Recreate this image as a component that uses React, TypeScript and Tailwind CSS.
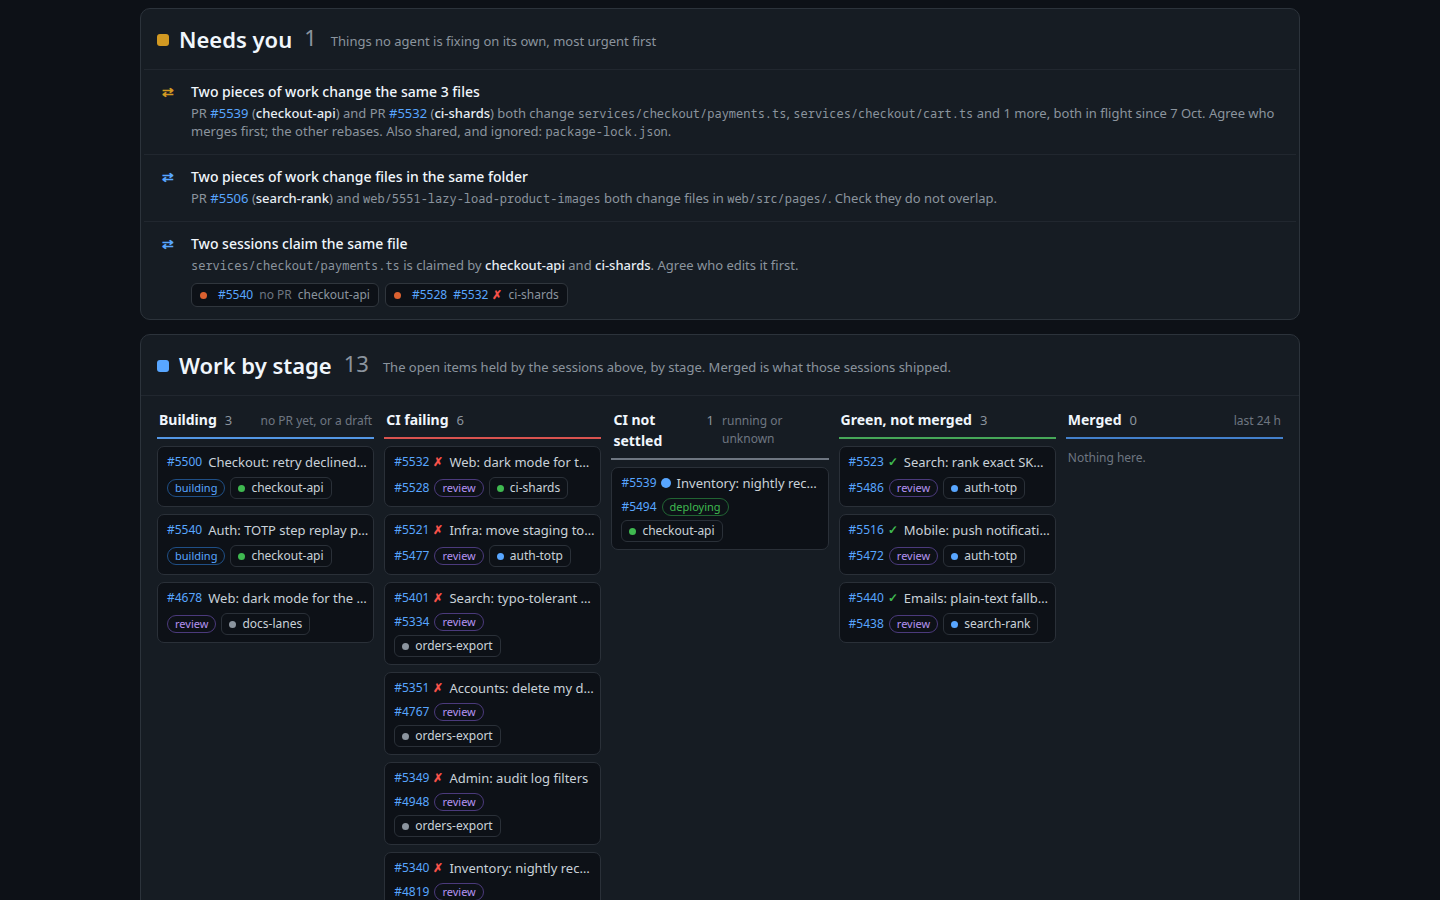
import type { ReactNode } from 'react';

type Tone = 'green' | 'blue' | 'gray';
type Stage = 'building' | 'review' | 'deploying';
type Check = 'fail' | 'pass' | 'running';

type Work = {
  id: string;
  title: string;
  check?: Check;
  issue?: string;
  stage: Stage;
  session: string;
  tone: Tone;
};

type Column = {
  name: string;
  count: number;
  note?: string;
  line: string;
  items: Work[];
};

const dotTone = {
  green: 'bg-[#3fb950]',
  blue: 'bg-[#58a6ff]',
  gray: 'bg-[#8b949e]',
};

const stageTone = {
  building: 'border-[#1f4f86] text-[#58a6ff]',
  review: 'border-[#4b3a7c] text-[#b392f0]',
  deploying: 'border-[#216433] text-[#3fb950]',
};

const columns: Column[] = [
  {
    name: 'Building',
    count: 3,
    note: 'no PR yet, or a draft',
    line: 'border-[#5497e5]',
    items: [
      { id: '#5500', title: 'Checkout: retry declined…', stage: 'building', session: 'checkout-api', tone: 'green' },
      { id: '#5540', title: 'Auth: TOTP step replay p…', stage: 'building', session: 'checkout-api', tone: 'green' },
      { id: '#4678', title: 'Web: dark mode for the …', stage: 'review', session: 'docs-lanes', tone: 'gray' },
    ],
  },
  {
    name: 'CI failing',
    count: 6,
    line: 'border-[#d9534f]',
    items: [
      { id: '#5532', check: 'fail', title: 'Web: dark mode for t…', issue: '#5528', stage: 'review', session: 'ci-shards', tone: 'green' },
      { id: '#5521', check: 'fail', title: 'Infra: move staging to…', issue: '#5477', stage: 'review', session: 'auth-totp', tone: 'blue' },
      { id: '#5401', check: 'fail', title: 'Search: typo-tolerant …', issue: '#5334', stage: 'review', session: 'orders-export', tone: 'gray' },
      { id: '#5351', check: 'fail', title: 'Accounts: delete my d…', issue: '#4767', stage: 'review', session: 'orders-export', tone: 'gray' },
      { id: '#5349', check: 'fail', title: 'Admin: audit log filters', issue: '#4948', stage: 'review', session: 'orders-export', tone: 'gray' },
      { id: '#5340', check: 'fail', title: 'Inventory: nightly rec…', issue: '#4819', stage: 'review', session: 'orders-export', tone: 'gray' },
    ],
  },
  {
    name: 'CI not settled',
    count: 1,
    note: 'running or unknown',
    line: 'border-[#6e7681]',
    items: [
      { id: '#5539', check: 'running', title: 'Inventory: nightly rec…', issue: '#5494', stage: 'deploying', session: 'checkout-api', tone: 'green' },
    ],
  },
  {
    name: 'Green, not merged',
    count: 3,
    line: 'border-[#46a758]',
    items: [
      { id: '#5523', check: 'pass', title: 'Search: rank exact SK…', issue: '#5486', stage: 'review', session: 'auth-totp', tone: 'blue' },
      { id: '#5516', check: 'pass', title: 'Mobile: push notificati…', issue: '#5472', stage: 'review', session: 'auth-totp', tone: 'blue' },
      { id: '#5440', check: 'pass', title: 'Emails: plain-text fallb…', issue: '#5438', stage: 'review', session: 'search-rank', tone: 'blue' },
    ],
  },
  { name: 'Merged', count: 0, note: 'last 24 h', line: 'border-[#4380cb]', items: [] },
];

function Ref({ children }: { children: string }) {
  return <a href={children} className="text-[#58a6ff] hover:underline">{children}</a>;
}

function Code({ children }: { children: string }) {
  return <code className="font-['Noto_Sans_Mono','DejaVu_Sans_Mono',monospace] text-[12px] leading-none">{children}</code>;
}

function Name({ children }: { children: string }) {
  return <b className="font-medium text-[#e6edf3]">{children}</b>;
}

function CheckMark({ check }: { check: Check }) {
  if (check === 'running') return <span className="w-[10px] h-[10px] rounded-full bg-[#58a6ff] shrink-0" />;
  if (check === 'pass') return <span className="font-bold text-[#3fb950]">✓</span>;
  return <span className="font-bold text-[#f85149]">✗</span>;
}

function PanelHead({ title, count, sub, square }: { title: string; count: number; sub: string; square: string }) {
  return (
    <header className="flex items-center h-[61px] border-b border-[#21272f]">
      <span className={`w-3 h-3 rounded-[3px] mt-[2px] mr-[10px] ${square}`} />
      <h2 className="text-[22px] leading-[30px] font-semibold text-[#f0f6fc]">{title}</h2>
      <div className="flex items-baseline gap-[14px] ml-3 pb-1">
        <span className="text-[22px] leading-[30px] text-[#8b949e]">{count}</span>
        <p className="text-[13px] text-[#8b949e]">{sub}</p>
      </div>
    </header>
  );
}

function Notice({ title, icon, children, chips }: { title: string; icon: string; children: ReactNode; chips?: ReactNode }) {
  return (
    <li className="flex pl-[14px] pr-[15px] pt-3 pb-[14px] border-b border-[#21272f] last:border-b-0 last:pb-3">
      <span className={`w-[33px] pl-1 shrink-0 text-[14px] leading-5 font-bold ${icon}`}>⇄</span>
      <div>
        <h3 className="text-[14px] leading-5 font-medium text-[#f0f6fc]">{title}</h3>
        <p className="mt-[2px] text-[13px] leading-[18px] text-[#8b949e]">{children}</p>
        {chips && <div className="flex flex-wrap gap-[6px] mt-[9px]">{chips}</div>}
      </div>
    </li>
  );
}

function SessionChip({ children }: { children: ReactNode }) {
  return (
    <span className="flex items-center gap-[6px] h-6 px-2 rounded-[6px] border border-[#30363d] bg-[#0d1117] text-[12px] text-[#8b949e]">
      <span className="w-[7px] h-[7px] mr-[5px] rounded-full bg-[#db6130]" />
      {children}
    </span>
  );
}

function Card({ work }: { work: Work }) {
  return (
    <li className="rounded-[7px] border border-[#2a3038] bg-[#0d1117] pl-[9px] pr-[3px] py-[7px]">
      <div className="flex items-center text-[13px] leading-4">
        <span className="flex items-center gap-1 shrink-0 mr-[6px] text-[12px] leading-4">
          <Ref>{work.id}</Ref>
          {work.check && <CheckMark check={work.check} />}
        </span>
        <span className="whitespace-nowrap text-[#c9d1d9]">{work.title}</span>
      </div>
      <div className="flex flex-wrap items-center gap-x-[5px] gap-y-1 mt-[7px] pr-[6px] text-[12px]">
        {work.issue && <span className="leading-[18px]"><Ref>{work.issue}</Ref></span>}
        <span className={`h-[18px] px-[7px] rounded-full border text-[11px] leading-4 ${stageTone[work.stage]}`}>
          {work.stage}
        </span>
        <button type="button" className="flex items-center gap-[6px] h-[22px] px-[7px] rounded-[6px] border border-[#2a3038] text-[#c9d1d9]">
          <span className={`w-[7px] h-[7px] rounded-full ${dotTone[work.tone]}`} />
          {work.session}
        </button>
      </div>
    </li>
  );
}

export default function App() {
  return (
    <div className="min-h-screen bg-[#0d1117] font-['Noto_Sans',sans-serif] pt-2 pb-6">
      <main className="max-w-[1160px] mx-auto flex flex-col gap-[14px]">
        <section className="rounded-[10px] border border-[#2c333b] bg-[#161c23] px-[3px]">
          <div className="[&>header]:pl-[13px]">
            <PanelHead title="Needs you" count={1} sub="Things no agent is fixing on its own, most urgent first" square="bg-[#d29922]" />
          </div>
          <ul>
            <Notice title="Two pieces of work change the same 3 files" icon="text-[#d29922]">
              PR <Ref>#5539</Ref> (<Name>checkout-api</Name>) and PR <Ref>#5532</Ref> (<Name>ci-shards</Name>) both change{' '}
              <Code>services/checkout/payments.ts</Code>, <Code>services/checkout/cart.ts</Code> and 1 more, both in flight
              since 7 Oct. Agree who merges first; the other rebases. Also shared, and ignored: <Code>package-lock.json</Code>.
            </Notice>
            <Notice title="Two pieces of work change files in the same folder" icon="text-[#58a6ff]">
              PR <Ref>#5506</Ref> (<Name>search-rank</Name>) and <Code>web/5551-lazy-load-product-images</Code> both change
              files in <Code>web/src/pages/</Code>. Check they do not overlap.
            </Notice>
            <Notice
              title="Two sessions claim the same file"
              icon="text-[#58a6ff]"
              chips={
                <>
                  <SessionChip>
                    <Ref>#5540</Ref>
                    <span className="text-[#6e7681]">no PR</span>
                    <span>checkout-api</span>
                  </SessionChip>
                  <SessionChip>
                    <Ref>#5528</Ref>
                    <span className="flex gap-1">
                      <Ref>#5532</Ref>
                      <CheckMark check="fail" />
                    </span>
                    <span>ci-shards</span>
                  </SessionChip>
                </>
              }
            >
              <Code>services/checkout/payments.ts</Code> is claimed by <Name>checkout-api</Name> and <Name>ci-shards</Name>.
              Agree who edits it first.
            </Notice>
          </ul>
        </section>

        <section className="rounded-[10px] border border-[#2c333b] bg-[#161c23]">
          <div className="[&>header]:pl-4">
            <PanelHead title="Work by stage" count={13} sub="The open items held by the sessions above, by stage. Merged is what those sessions shipped." square="bg-[#58a6ff]" />
          </div>
          <div className="grid grid-cols-5 items-start gap-[10px] px-4 pt-[13px] pb-4">
            {columns.map((col) => (
              <div key={col.name} className="min-w-0">
                <div className={`flex items-baseline gap-2 px-[2px] pb-[7px] border-b-2 ${col.line}`}>
                  <h3 className="text-[14px] leading-[21px] font-bold text-[#f0f6fc]">{col.name}</h3>
                  <span className="text-[13px] leading-[18px] text-[#8b949e]">{col.count}</span>
                  {col.note && <span className="ml-auto text-[12px] leading-[18px] text-[#6e7681]">{col.note}</span>}
                </div>
                {col.items.length > 0 ? (
                  <ul className="flex flex-col gap-[7px] mt-[7px]">
                    {col.items.map((work) => (
                      <Card key={work.id} work={work} />
                    ))}
                  </ul>
                ) : (
                  <p className="mt-[9px] px-[2px] text-[12px] leading-[20px] text-[#6e7681]">Nothing here.</p>
                )}
              </div>
            ))}
          </div>
        </section>
      </main>
    </div>
  );
}
